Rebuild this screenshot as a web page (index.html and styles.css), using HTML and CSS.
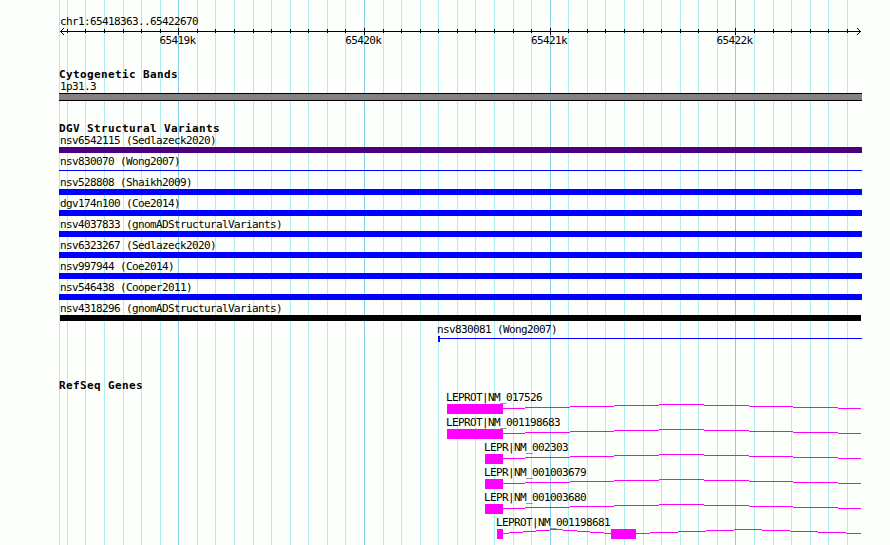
FILE: index.html
```html
<!DOCTYPE html>
<html lang="en">
<head>
  <meta charset="UTF-8" />
  <title>chr1:65418363..65422670</title>
  <link rel="stylesheet" href="styles.css">
</head>
<body>
  <div class="browser">
    <!-- grid lines every 100 bp, darker every 1 kb -->
    <svg class="grid" width="890" height="545" shape-rendering="crispEdges">
      <path class="minor" d="M59.5 0v545M67.5 0v545M85.5 0v545M104.5 0v545M123.5 0v545M141.5 0v545M160.5 0v545M197.5 0v545M215.5 0v545M234.5 0v545M253.5 0v545M271.5 0v545M290.5 0v545M308.5 0v545M327.5 0v545M345.5 0v545M383.5 0v545M401.5 0v545M420.5 0v545M438.5 0v545M457.5 0v545M475.5 0v545M494.5 0v545M513.5 0v545M531.5 0v545M568.5 0v545M587.5 0v545M605.5 0v545M624.5 0v545M643.5 0v545M661.5 0v545M680.5 0v545M698.5 0v545M717.5 0v545M754.5 0v545M773.5 0v545M791.5 0v545M810.5 0v545M828.5 0v545M847.5 0v545" />
      <path class="major" d="M178.5 0v545M364.5 0v545M550.5 0v545M735.5 0v545" />
    </svg>

    <div class="tracks">
      <div class="ruler">
        <div class="label">chr1:65418363..65422670</div>
        <svg class="axis" width="803" height="8" viewBox="59 28 803 8" shape-rendering="crispEdges">
          <path d="M60 31.5H861" />
          <path d="M67.5 29v4M85.5 29v4M104.5 29v4M123.5 29v4M141.5 29v4M160.5 29v4M197.5 29v4M215.5 29v4M234.5 29v4M253.5 29v4M271.5 29v4M290.5 29v4M308.5 29v4M327.5 29v4M345.5 29v4M383.5 29v4M401.5 29v4M420.5 29v4M438.5 29v4M457.5 29v4M475.5 29v4M494.5 29v4M513.5 29v4M531.5 29v4M568.5 29v4M587.5 29v4M605.5 29v4M624.5 29v4M643.5 29v4M661.5 29v4M680.5 29v4M698.5 29v4M717.5 29v4M754.5 29v4M773.5 29v4M791.5 29v4M810.5 29v4M828.5 29v4M847.5 29v4" />
          <path d="M178.5 28v7M364.5 28v7M550.5 28v7M735.5 28v7" />
          <path d="M61 30.5h1M62 29.5h1M63 28.5h1M61 32.5h1M62 33.5h1M63 34.5h1" />
          <path d="M859 30.5h1M858 29.5h1M857 28.5h1M859 32.5h1M858 33.5h1M857 34.5h1" />
        </svg>
        <div class="ticks">
          <span>65419k</span><span>65420k</span><span>65421k</span><span>65422k</span>
        </div>
      </div>

      <section class="cyto">
        <h2>Cytogenetic Bands</h2>
        <div class="label">1p31.3</div>
        <div class="band"></div>
      </section>

      <section class="dgv">
        <h2>DGV Structural Variants</h2>
        <div class="variant"><div class="label">nsv6542115 (Sedlazeck2020)</div><div class="bar indigo"></div></div>
        <div class="variant"><div class="label">nsv830070 (Wong2007)</div><div class="bar thin"></div></div>
        <div class="variant"><div class="label">nsv528808 (Shaikh2009)</div><div class="bar"></div></div>
        <div class="variant"><div class="label">dgv174n100 (Coe2014)</div><div class="bar"></div></div>
        <div class="variant"><div class="label">nsv4037833 (gnomADStructuralVariants)</div><div class="bar"></div></div>
        <div class="variant"><div class="label">nsv6323267 (Sedlazeck2020)</div><div class="bar"></div></div>
        <div class="variant"><div class="label">nsv997944 (Coe2014)</div><div class="bar"></div></div>
        <div class="variant"><div class="label">nsv546438 (Cooper2011)</div><div class="bar"></div></div>
        <div class="variant"><div class="label">nsv4318296 (gnomADStructuralVariants)</div><div class="bar black"></div></div>
        <div class="variant partial"><div class="label">nsv830081 (Wong2007)</div><div class="bar thin"></div></div>
      </section>

      <section class="genes">
        <h2>RefSeq Genes</h2>
        <div class="gene from-447">
          <div class="label">LEPROT|NM_017526</div>
          <svg width="414" height="10" viewBox="447 404 414 10" shape-rendering="crispEdges">
            <path class="exon" d="M447 404h56v10h-56z" />
            <path class="intron" d="M503 408.5h22m0-1h45m0-1h44m0-1h45m0-1h45m0 1h45m0 1h44m0 1h45m0 1h23" />
          </svg>
        </div>
        <div class="gene from-447">
          <div class="label">LEPROT|NM_001198683</div>
          <svg width="414" height="10" viewBox="447 404 414 10" shape-rendering="crispEdges">
            <path class="exon" d="M447 404h56v10h-56z" />
            <path class="intron" d="M503 408.5h22m0-1h45m0-1h44m0-1h45m0-1h45m0 1h45m0 1h44m0 1h45m0 1h23" />
          </svg>
        </div>
        <div class="gene from-485">
          <div class="label">LEPR|NM_002303</div>
          <svg width="376" height="10" viewBox="485 404 376 10" shape-rendering="crispEdges">
            <path class="exon" d="M485 404h18v10h-18z" />
            <path class="intron" d="M503 408.5h22m0-1h45m0-1h44m0-1h45m0-1h45m0 1h45m0 1h44m0 1h45m0 1h23" />
          </svg>
        </div>
        <div class="gene from-485">
          <div class="label">LEPR|NM_001003679</div>
          <svg width="376" height="10" viewBox="485 404 376 10" shape-rendering="crispEdges">
            <path class="exon" d="M485 404h18v10h-18z" />
            <path class="intron" d="M503 408.5h22m0-1h45m0-1h44m0-1h45m0-1h45m0 1h45m0 1h44m0 1h45m0 1h23" />
          </svg>
        </div>
        <div class="gene from-485">
          <div class="label">LEPR|NM_001003680</div>
          <svg width="376" height="10" viewBox="485 404 376 10" shape-rendering="crispEdges">
            <path class="exon" d="M485 404h18v10h-18z" />
            <path class="intron" d="M503 408.5h22m0-1h45m0-1h44m0-1h45m0-1h45m0 1h45m0 1h44m0 1h45m0 1h23" />
          </svg>
        </div>
        <div class="gene from-497">
          <div class="label">LEPROT|NM_001198681</div>
          <svg width="364" height="10" viewBox="497 404 364 10" shape-rendering="crispEdges">
            <path class="exon" d="M497 404h6v10h-6zM611 404h25v10h-25z" />
            <path class="intron" d="M503 408.5h6m0-1h14m0-1h13m0-1h14m0-1h13m0 1h14m0 1h13m0 1h14m0 1h7M636 408.5h14m0-1h28m0-1h28m0-1h28m0-1h28m0 1h28m0 1h28m0 1h28m0 1h15" />
          </svg>
        </div>
      </section>
    </div>
  </div>
</body>
</html>
```

FILE: styles.css
```css
body {
  margin: 0;
  background: #fdfffc;
  color: #000;
  font-family: "DejaVu Sans Mono", monospace;
  overflow: hidden;
}
.browser {
  position: relative;
  width: 890px;
  height: 545px;
  overflow: hidden;
}
.grid {
  position: absolute;
  top: 0;
  left: 0;
}
.grid path, .axis path, .intron { fill: none; stroke-width: 1; }
.grid .minor { stroke: #afeeee; }
.grid .major { stroke: #87ceeb; }
.axis path { stroke: #000; }
svg { display: block; }

.tracks {
  position: relative;
  width: 803px;
  padding: 16px 0 0 59px;
}
.label {
  height: 12px;
  padding-left: 1px;
  font-size: 11px;
  line-height: 12px;
  letter-spacing: -0.62px;
  white-space: nowrap;
}
h2 {
  height: 12px;
  margin: 0;
  font-size: 11px;
  line-height: 11px;
  letter-spacing: 0.38px;
  white-space: nowrap;
}

.ruler { height: 53px; }
.ticks {
  display: flex;
  gap: 149.7px;
  margin-top: -1px;
  padding-left: 100.5px;
  font-size: 11px;
  line-height: 12px;
  letter-spacing: -0.62px;
}
.ticks span { width: 36px; }

.cyto { height: 54px; }
.band {
  height: 6px;
  background: #848084;
  border: solid #000;
  border-width: 1px 0;
}

.dgv { height: 257px; }
.variant { height: 21px; }
.bar { height: 6px; background: #0000ff; }
.bar.indigo { background: #4b0082; }
.bar.black { margin: 0 1px; background: #000; }
.bar.thin { height: 1px; margin-top: 2px; }
.partial { padding-left: 379px; }
.partial .label { padding-left: 0; margin-left: -1px; }
.partial .bar.thin {
  height: 6px;
  margin-top: 0;
  border-left: 2px solid #0000ff;
  background: linear-gradient(#0000ff, #0000ff) 0 2px / 100% 1px no-repeat;
}

.gene { height: 25px; }
.gene .label { padding-left: 0; margin-left: -1px; }
.from-447 { padding-left: 388px; }
.from-485 { padding-left: 426px; }
.from-497 { padding-left: 438px; }
.exon { fill: #ff00ff; }
.intron { stroke: #ff00ff; }
```
